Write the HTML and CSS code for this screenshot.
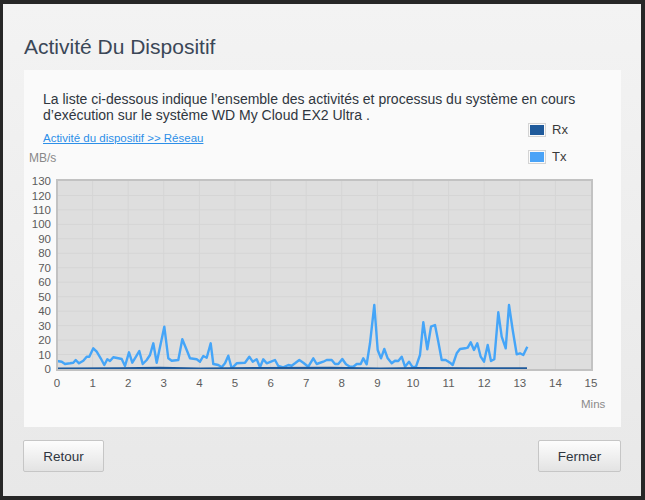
FILE: index.html
```html
<!DOCTYPE html>
<html lang="fr">
<head>
    <meta charset="UTF-8">
    <title>Activité Du Dispositif</title>
    <link rel="stylesheet" href="styles.css">
</head>
<body>
    <div class="dialog">
        <h1 class="dialog-title">Activité Du Dispositif</h1>

        <div class="panel">
            <p class="intro">La liste ci-dessous indique l’ensemble des activités et processus du système en cours d’exécution sur le système WD My Cloud EX2 Ultra .</p>

            <div class="chart-head">
                <div class="chart-head-left">
                    <a class="crumb" href="#">Activité du dispositif &gt;&gt; Réseau</a>
                    <span class="unit">MB/s</span>
                </div>
                <ul class="legend">
                    <li><span class="swatch"><span class="swatch-rx"></span></span>Rx</li>
                    <li><span class="swatch"><span class="swatch-tx"></span></span>Tx</li>
                </ul>
            </div>

            <svg class="chart" width="597" height="255" viewBox="24 165 597 255">
                <rect class="plot-bg" x="57" y="180" width="535" height="190"/>
                <g class="grid">
                    <line x1="92.6" y1="180" x2="92.6" y2="370"/>
                    <line x1="128.2" y1="180" x2="128.2" y2="370"/>
                    <line x1="163.8" y1="180" x2="163.8" y2="370"/>
                    <line x1="199.4" y1="180" x2="199.4" y2="370"/>
                    <line x1="235" y1="180" x2="235" y2="370"/>
                    <line x1="270.6" y1="180" x2="270.6" y2="370"/>
                    <line x1="306.2" y1="180" x2="306.2" y2="370"/>
                    <line x1="341.8" y1="180" x2="341.8" y2="370"/>
                    <line x1="377.4" y1="180" x2="377.4" y2="370"/>
                    <line x1="413" y1="180" x2="413" y2="370"/>
                    <line x1="448.6" y1="180" x2="448.6" y2="370"/>
                    <line x1="484.2" y1="180" x2="484.2" y2="370"/>
                    <line x1="519.8" y1="180" x2="519.8" y2="370"/>
                    <line x1="555.4" y1="180" x2="555.4" y2="370"/>
                    <line x1="57" y1="354.5" x2="592" y2="354.5"/>
                    <line x1="57" y1="340.1" x2="592" y2="340.1"/>
                    <line x1="57" y1="325.6" x2="592" y2="325.6"/>
                    <line x1="57" y1="311.2" x2="592" y2="311.2"/>
                    <line x1="57" y1="296.7" x2="592" y2="296.7"/>
                    <line x1="57" y1="282.2" x2="592" y2="282.2"/>
                    <line x1="57" y1="267.8" x2="592" y2="267.8"/>
                    <line x1="57" y1="253.3" x2="592" y2="253.3"/>
                    <line x1="57" y1="238.8" x2="592" y2="238.8"/>
                    <line x1="57" y1="224.4" x2="592" y2="224.4"/>
                    <line x1="57" y1="209.9" x2="592" y2="209.9"/>
                    <line x1="57" y1="195.5" x2="592" y2="195.5"/>
                </g>

                <polyline class="line-tx" points="57,361 61.7,361.7 65,364 70,363.3 73.3,362.7 75.7,360 79,363.3 83.3,360.7 86.7,356.7 89.3,356.7 93.3,348.3 96.7,351.7 100.7,358.3 104.3,365 107.3,359.3 110,361 113.3,357.3 118.3,358.3 121.7,359 125,366 129,352.3 132.3,362.7 136,356.7 139.3,351 142.7,364 146.7,360 150,355 153.3,343.3 156.7,362.7 164.3,326.7 168.3,358.3 171.7,360.7 178.3,360 182.3,339.3 186.7,350 190,358.3 196.7,359.3 200,361.7 203.3,356 206.7,357.7 210.7,343.3 213.3,364 218.3,365 221.7,367.3 225,363.3 228.3,355.7 231.7,368.3 236.7,363.3 245,362.7 249.3,356.7 252.7,361.7 256.7,359.3 260,367.3 263.3,359.3 266.7,363.3 271,361.7 275,360 278.3,366 283.3,367.3 288.3,365 291.7,365.7 295,363.3 299.3,360 303.3,362.7 308.3,366.7 313.3,358.3 316.7,364 323.3,361.7 326.7,360 331.7,360 335,364 338.3,364 342.3,359 346,364.3 350,366.7 353.3,366.7 356.7,364 360.7,364 363.3,358.3 366.7,364.3 370,343.3 374.3,305 377.7,350 381,358.3 384.3,349 387.7,358.3 391.7,363.3 395,360.7 398.3,361 401.7,356.7 405,366.7 409,361.7 412.7,367.3 416,366.7 420,355 423.3,322.3 427.3,349.3 431,326.7 435,325 438.3,341.7 441.7,360 445.7,360 450,362.7 452.7,365 456.7,353.3 460,349 465,348.3 467.7,347.7 470.7,342.3 474,350 477.3,343.3 480.7,356.7 484,361.7 487.7,345 491,361 494.3,359.3 498.3,312.3 501.7,336.7 505.7,348.3 509,305 512.7,330 516.7,354.3 520,353.3 523.3,355 527.3,346.7"/>
                <polyline class="line-rx" points="57,368.6 120,368.4 160,368 200,368.6 260,368.2 330,367.9 380,368.6 420,368.1 470,368.5 527,368.4"/>

                <rect class="plot-frame" x="57" y="180" width="535" height="190"/>

                <g class="axis-y">
                    <text x="51" y="373">0</text>
                    <text x="51" y="358.5">10</text>
                    <text x="51" y="344.1">20</text>
                    <text x="51" y="329.6">30</text>
                    <text x="51" y="315.2">40</text>
                    <text x="51" y="300.7">50</text>
                    <text x="51" y="286.2">60</text>
                    <text x="51" y="271.8">70</text>
                    <text x="51" y="257.3">80</text>
                    <text x="51" y="242.8">90</text>
                    <text x="51" y="228.4">100</text>
                    <text x="51" y="213.9">110</text>
                    <text x="51" y="199.5">120</text>
                    <text x="51" y="185">130</text>
                </g>
                <g class="axis-x">
                    <text x="57" y="387">0</text>
                    <text x="92.6" y="387">1</text>
                    <text x="128.2" y="387">2</text>
                    <text x="163.8" y="387">3</text>
                    <text x="199.4" y="387">4</text>
                    <text x="235" y="387">5</text>
                    <text x="270.6" y="387">6</text>
                    <text x="306.2" y="387">7</text>
                    <text x="341.8" y="387">8</text>
                    <text x="377.4" y="387">9</text>
                    <text x="413" y="387">10</text>
                    <text x="448.6" y="387">11</text>
                    <text x="484.2" y="387">12</text>
                    <text x="519.8" y="387">13</text>
                    <text x="555.4" y="387">14</text>
                    <text x="591" y="387">15</text>
                </g>
                <text class="axis-name" x="581" y="408">Mins</text>
            </svg>
        </div>

        <div class="dialog-buttons">
            <button class="btn btn-back">Retour</button>
            <button class="btn btn-close">Fermer</button>
        </div>
    </div>
</body>
</html>
```

FILE: styles.css
```css
body {
    margin: 0;
    background-color: #272727;
    font-family: "Liberation Sans", Arial, sans-serif;
}

.dialog {
    width: 638px;
    height: 492px;
    margin: 4px 4px 4px 3px;
    background: linear-gradient(#f3f3f3, #e8e8e8);
    overflow: hidden;
}

.dialog-title {
    margin: 30px 0 0 21px;
    font-size: 21px;
    line-height: 26px;
    font-weight: normal;
    color: #3b4757;
}

.panel {
    box-sizing: border-box;
    width: 597px;
    height: 357px;
    margin: 10px 0 0 21px;
    padding-top: 21px;
    background-color: #fafafa;
}

.intro {
    margin: 0 20px 0 19px;
    font-size: 14px;
    line-height: 16px;
    color: #2f3640;
}

.chart-head {
    display: flex;
    justify-content: space-between;
    padding-right: 53px;
}

.chart-head-left {
    display: flex;
    flex-direction: column;
    align-items: flex-start;
}

.crumb {
    margin: 8px 0 0 19px;
    font-size: 11.5px;
    line-height: 14px;
    color: #2d8fe8;
}

.unit {
    margin: 6px 0 0 5px;
    font-size: 12px;
    line-height: 14px;
    color: #888;
}

.legend {
    list-style: none;
    margin: 0;
    padding: 0;
    display: flex;
    flex-direction: column;
    gap: 13px;
}

.legend li {
    display: flex;
    align-items: center;
    gap: 6px;
    font-size: 13px;
    line-height: 14px;
    color: #3a3a3a;
}

.swatch {
    display: inline-block;
    padding: 1px;
    border: 1px solid #d4d4d4;
}

.swatch span {
    display: block;
    width: 14px;
    height: 10px;
}

.swatch-rx {
    background-color: #1f5a9b;
}

.swatch-tx {
    background-color: #4aa3f7;
}

.chart {
    display: block;
    font-family: "Liberation Sans", Arial, sans-serif;
}

.plot-bg {
    fill: #dedede;
}

.plot-frame {
    fill: none;
    stroke: #c2c2c2;
    stroke-width: 2;
}

.grid line {
    stroke: #d5d5d5;
    stroke-width: 1;
}

.line-tx {
    fill: none;
    stroke: #45a5f8;
    stroke-width: 2.4;
    stroke-linejoin: round;
}

.line-rx {
    fill: none;
    stroke: #1f5a9b;
    stroke-width: 2.4;
}

.axis-y text {
    font-size: 11.5px;
    fill: #5c5c5c;
    text-anchor: end;
}

.axis-x text {
    font-size: 11.5px;
    fill: #5c5c5c;
    text-anchor: middle;
}

.axis-name {
    font-size: 11.5px;
    fill: #8a8a8a;
}

.dialog-buttons {
    display: flex;
    justify-content: space-between;
    margin: 13px 20px 0 20px;
}

.btn {
    height: 32px;
    padding: 0;
    border: 1px solid #c6c6c6;
    border-radius: 2px;
    background: linear-gradient(#fdfdfd, #e3e3e3);
    font-family: "Liberation Sans", Arial, sans-serif;
    font-size: 13.5px;
    color: #2f3640;
}

.btn-back {
    width: 81px;
}

.btn-close {
    width: 83px;
}
```
